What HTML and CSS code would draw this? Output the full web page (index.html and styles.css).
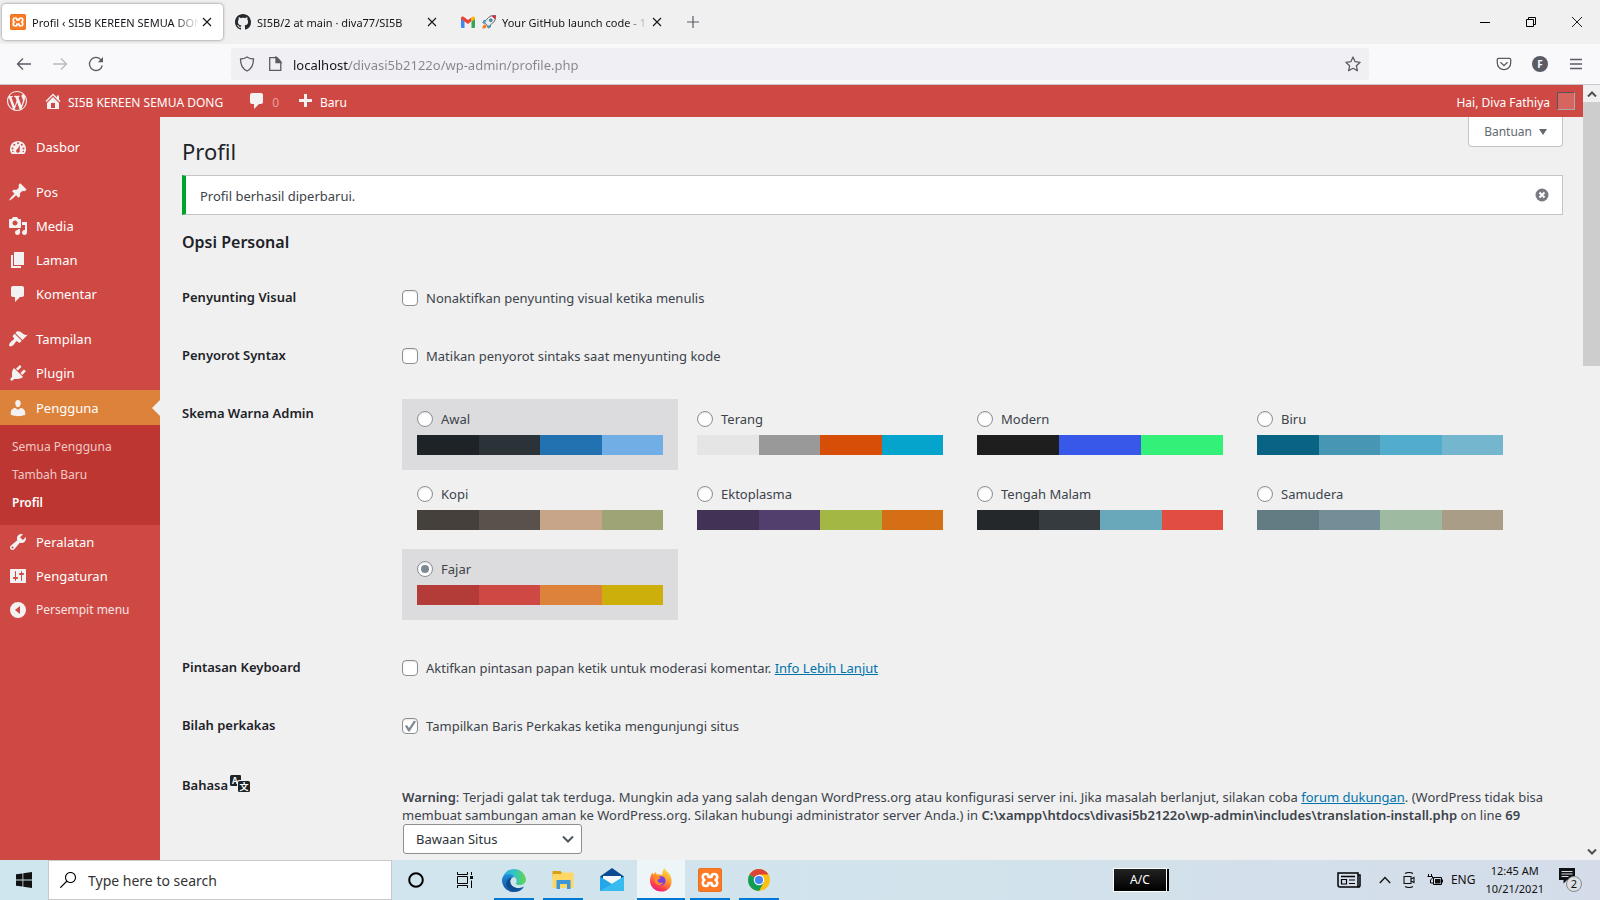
FILE: index.html
```html
<!DOCTYPE html>
<html lang="id">
<head>
<meta charset="utf-8">
<title>Profil ‹ SI5B KEREEN SEMUA DONG</title>
<link rel="stylesheet" href="styles.css">
</head>
<body>
<svg class="defs" aria-hidden="true">
  <symbol id="x" viewBox="0 0 10 10"><path d="M1 1l8 8M9 1L1 9" stroke="currentColor" stroke-width="1.1" fill="none"/></symbol>
  <symbol id="comment" viewBox="0 0 20 20"><path d="M5 2h9c1.1 0 2 .9 2 2v7c0 1.1-.9 2-2 2h-2l-5 5v-5H5c-1.1 0-2-.9-2-2V4c0-1.1.9-2 2-2z"/></symbol>
  <symbol id="xampp" viewBox="0 0 24 24"><rect width="24" height="24" rx="2.5" fill="#e8701f"/><rect x="1" y="1" width="22" height="22" rx="2" fill="#fb7a24"/><path d="M8 6C4 6 4 10.500 6.500 12 4 13.500 4 18 8 18c2.500 0 2.500-1.500 2.500-3h3c0 1.500 0 3 2.500 3 4 0 4-4.500 1.500-6C20 10.500 20 6 16 6c-2.500 0-2.500 1.500-2.500 3h-3c0-1.500 0-3-2.500-3z" fill="none" stroke="#fff" stroke-width="2.600" stroke-linejoin="round"/></symbol>
</svg>

<header class="browser">
  <div class="tabstrip">
    <div class="tab tab-active">
      <svg class="favicon"><use href="#xampp"/></svg>
      <span class="tab-title">Profil ‹ SI5B KEREEN SEMUA DONG</span>
      <button class="tab-close" aria-label="Close tab"><svg><use href="#x"/></svg></button>
    </div>
    <div class="tab">
      <svg class="favicon" viewBox="0 0 16 16"><path fill="#24292f" d="M8 0C3.580 0 0 3.580 0 8c0 3.540 2.290 6.530 5.470 7.590.4.070.55-.17.55-.38 0-.19-.01-.82-.01-1.490-2.010.37-2.530-.49-2.690-.94-.09-.23-.48-.94-.82-1.130-.28-.15-.68-.52-.01-.53.63-.01 1.080.58 1.230.82.72 1.210 1.870.87 2.330.66.070-.52.28-.87.51-1.070-1.780-.2-3.640-.89-3.640-3.950 0-.87.31-1.590.82-2.150-.08-.2-.36-1.020.08-2.120 0 0 .67-.21 2.200.82.64-.18 1.320-.27 2-.27s1.360.09 2 .27c1.530-1.040 2.200-.82 2.200-.82.44 1.100.16 1.920.08 2.120.51.56.82 1.270.82 2.150 0 3.070-1.870 3.750-3.650 3.950.29.25.54.73.54 1.480 0 1.070-.01 1.930-.01 2.200 0 .21.15.46.55.38A8.010 8.010 0 0 0 16 8c0-4.420-3.580-8-8-8z"/></svg>
      <span class="tab-title">SI5B/2 at main · diva77/SI5B</span>
      <button class="tab-close" aria-label="Close tab"><svg><use href="#x"/></svg></button>
    </div>
    <div class="tab">
      <svg class="favicon" viewBox="0 0 16 16"><path fill="#4285f4" d="M1 4.500l3.500 2.600V14H2a1 1 0 0 1-1-1z"/><path fill="#34a853" d="M11.500 7.100L15 4.500V13a1 1 0 0 1-1 1h-2.500z"/><path fill="#ea4335" d="M1 5V4c0-1.500 1.600-2 2.600-1.200L8 6.100l3.500-2.600v3.600L8 9.900 1 5z"/><path fill="#fbbc04" d="M11.500 3.400l.9-.6C13.500 2 15 2.600 15 4v1l-3.500 2.500z"/></svg>
      <svg class="rocket" viewBox="0 0 16 16"><path d="M15.500.5C10 0 7 2.500 4.800 6L2 6.500 1 9l2.500.3 3 3L7 15l2.500-1.200.3-2.800C13.500 8.500 16 6 15.500.5z" fill="#e8edf0" stroke="#333" stroke-width=".8"/><path d="M15.500.5c-2 0-3.200.2-4.300.8l3.500 3.500c.7-1.200.9-2.600.8-4.300z" fill="#e0243a"/><path d="M4.800 6L2 6.500 1 9l2.500.3zM9.800 11l-.3 2.800L7 15l-.4-2.700z" fill="#35a8d8"/><circle cx="10" cy="6" r="1.600" fill="#35a8d8" stroke="#333" stroke-width=".6"/><path d="M3.500 10.500C1.500 11 .6 13 .5 15.500 3 15.400 5 14.500 5.500 12.500z" fill="#f47a20"/></svg>
      <span class="tab-title">Your GitHub launch code - 1</span>
      <button class="tab-close" aria-label="Close tab"><svg><use href="#x"/></svg></button>
    </div>
    <button class="newtab" aria-label="New tab"><svg viewBox="0 0 12 12"><path d="M6 0v12M0 6h12" stroke="#5b5b66" stroke-width="1.200"/></svg></button>
    <div class="window-buttons">
      <button aria-label="Minimize"><svg viewBox="0 0 10 10"><path d="M0 5.500h10" stroke="#000"/></svg></button>
      <button aria-label="Restore"><svg viewBox="0 0 10 10"><path d="M.5 2.500h7v7h-7zM2.500 2.500v-2h7v7h-2" fill="none" stroke="#000"/></svg></button>
      <button aria-label="Close"><svg viewBox="0 0 10 10"><path d="M0 0l10 10M10 0L0 10" stroke="#000" stroke-width=".9"/></svg></button>
    </div>
  </div>
  <div class="toolbar">
    <div class="nav-buttons">
      <button aria-label="Back"><svg viewBox="0 0 16 16"><path d="M15 8H1.500M7 2.500L1.500 8 7 13.500"/></svg></button>
      <button aria-label="Forward" disabled><svg viewBox="0 0 16 16"><path d="M1 8h13.500M9 2.500L14.500 8 9 13.500"/></svg></button>
      <button aria-label="Reload"><svg viewBox="0 0 16 16"><path d="M14.300 9.500A6.500 6.500 0 1 1 12.800 3.600L14 5"/><path d="M15 1v5.200H9.800z" fill="#5b5b66" stroke="none"/></svg></button>
    </div>
    <div class="urlbar">
      <svg viewBox="0 0 16 16"><path d="M8 1C6 2.500 3.800 3 1.500 3c0 6 1.800 9.800 6.500 12 4.700-2.200 6.500-6 6.500-12C12.200 3 10 2.500 8 1z"/></svg>
      <svg class="doc" viewBox="0 0 16 16"><path d="M2.700 1.700h7.300l3.800 4v8.600H2.700z"/><path d="M9 1v5.500h5z" fill="#5b5b66"/></svg>
      <input type="text" aria-label="Address" value="localhost/divasi5b2122o/wp-admin/profile.php">
      <button aria-label="Bookmark"><svg viewBox="0 0 16 16"><path d="M8 1l2.100 4.700 5 .6-3.700 3.500 1 5L8 12.300l-4.400 2.500 1-5L.9 6.300l5-.6z" stroke-linejoin="round"/></svg></button>
    </div>
    <div class="tool-buttons">
      <button aria-label="Pocket"><svg viewBox="0 0 16 16"><path d="M2.500 2.300h11c.7 0 1.200.5 1.200 1.200V7a6.700 6.700 0 0 1-13.400 0V3.500c0-.7.5-1.200 1.200-1.200zM4.500 6.300L8 9.600l3.500-3.300"/></svg></button>
      <button class="account" aria-label="Account">F</button>
      <button aria-label="Menu"><svg viewBox="0 0 16 16"><path d="M2 3.500h12M2 8h12M2 12.500h12"/></svg></button>
    </div>
  </div>
</header>

<div class="viewport">
<div class="wp">
  <nav class="adminbar" aria-label="Toolbar">
    <a href="#" aria-label="WordPress"><svg class="wplogo" viewBox="0 0 20 20"><path d="M20 10c0-5.510-4.490-10-10-10C4.480 0 0 4.490 0 10c0 5.520 4.480 10 10 10 5.510 0 10-4.480 10-10zM7.780 15.370L4.370 6.220c.55-.02 1.170-.08 1.170-.08.5-.06.44-1.130-.06-1.110 0 0-1.450.11-2.370.11-.18 0-.37 0-.58-.01C4.120 2.690 6.870 1.110 10 1.110c2.330 0 4.450.87 6.050 2.340-.68-.11-1.650.39-1.650 1.580 0 .74.45 1.360.9 2.100.35.61.55 1.360.55 2.460 0 1.490-1.400 5-1.400 5l-3.030-8.370c.54-.02.82-.17.82-.17.5-.05.44-1.250-.06-1.220 0 0-1.440.12-2.380.12-.87 0-2.330-.12-2.330-.12-.5-.03-.56 1.200-.06 1.220l.92.08 1.260 3.410zM17.410 10c.24-.64.74-1.870.43-4.250.7 1.290 1.050 2.710 1.050 4.250 0 3.290-1.730 6.240-4.400 7.780.97-2.590 1.940-5.200 2.920-7.780zM6.100 18.090C3.120 16.650 1.110 13.530 1.110 10c0-1.300.23-2.480.72-3.590C3.250 10.300 4.670 14.200 6.100 18.090zm4.030-6.630l2.580 6.980c-.86.29-1.760.45-2.710.45-.79 0-1.570-.11-2.290-.33.81-2.380 1.620-4.740 2.420-7.100z"/></svg></a>
    <a href="#" class="site"><svg viewBox="0 0 20 20"><path d="M16 8.500l1.530 1.530-1.060 1.060L10 4.600l-6.470 6.490-1.060-1.060L10 2.500l4 4v-2h2v4zm-6-2.460l6 5.990V18H4v-5.970zM12 17v-5H8v5h4z"/></svg><span>SI5B KEREEN SEMUA DONG</span></a>
    <a href="#"><svg><use href="#comment"/></svg><span class="count">0</span></a>
    <a href="#"><svg viewBox="0 0 20 20"><path d="M17 8v3h-5v5H9v-5H4V8h5V3h3v5z"/></svg><span>Baru</span></a>
    <a href="#" class="greeting"><span>Hai, Diva Fathiya</span><i class="avatar"></i></a>
  </nav>
  <div class="wp-body">
    <nav class="menu" aria-label="Menu">
      <a href="#"><svg viewBox="0 0 20 20"><path fill-rule="evenodd" d="M3.760 17h12.480C17.340 15.630 18 13.890 18 12c0-4.410-3.580-8-8-8s-8 3.590-8 8c0 1.890.66 3.630 1.760 5z"/><g fill="#cf4944"><circle cx="10" cy="6.300" r="1"/><circle cx="6.300" cy="7.800" r="1"/><circle cx="13.800" cy="7.800" r="1"/><circle cx="4.500" cy="11.500" r="1"/><circle cx="15.500" cy="11.500" r="1"/><circle cx="4.800" cy="14.500" r=".8"/><circle cx="15.200" cy="14.500" r=".8"/><path d="M12 8.200l-.3 4.800a1.900 1.900 0 1 1-2.300-1z"/></g></svg>Dasbor</a>
      <a href="#" class="after-gap"><svg viewBox="0 0 20 20"><path d="M10.440 3.020l1.820-1.820 6.360 6.350-1.830 1.820c-1.050-.68-2.480-.57-3.410.36l-.75.75c-.92.93-1.040 2.350-.35 3.410l-1.830 1.820-2.410-2.410-2.800 2.790c-.42.42-3.380 2.710-3.800 2.290s1.860-3.390 2.280-3.810l2.790-2.790L4.100 9.360l1.830-1.820c1.050.69 2.480.57 3.400-.36l.75-.75c.93-.92 1.050-2.350.36-3.410z"/></svg>Pos</a>
      <a href="#"><svg viewBox="0 0 20 20"><path d="M13 11V4c0-.55-.45-1-1-1h-1.670L9 1H5L3.670 3H2c-.55 0-1 .45-1 1v7c0 .55.45 1 1 1h10c.55 0 1-.45 1-1zM7 4.500c1.380 0 2.500 1.120 2.500 2.500S8.380 9.500 7 9.500 4.500 8.380 4.500 7 5.620 4.500 7 4.500zM14 6h5v10.500c0 1.380-1.120 2.500-2.500 2.500S14 17.880 14 16.500s1.120-2.500 2.500-2.500c.17 0 .34.020.5.050V9h-3V6zm-4 8.050V13h2v3.500c0 1.380-1.120 2.500-2.500 2.500S7 17.880 7 16.500 8.120 14 9.500 14c.17 0 .34.020.5.050z"/></svg>Media</a>
      <a href="#"><svg viewBox="0 0 20 20"><path d="M6 15V2h10v13H6zm-1 1h8v2H3V5h2v11z"/></svg>Laman</a>
      <a href="#"><svg><use href="#comment"/></svg>Komentar</a>
      <a href="#" class="after-gap"><svg viewBox="0 0 20 20"><path d="M14.480 11.060L7.410 3.990l1.500-1.500c.5-.56 2.300-.47 3.510.32 1.210.8 1.430 1.280 2.910 2.100 1.180.64 2.450 1.260 4.450.85zm-.71.71L6.700 4.700 4.930 6.470c-.39.39-.39 1.020 0 1.410l1.060 1.060c.39.39.39 1.030 0 1.420-.6.6-1.430 1.110-2.210 1.690-.35.26-.7.53-1.010.84C1.430 14.230.4 16.080 1.400 17.070c.99 1 2.840-.03 4.180-1.360.31-.31.58-.66.85-1.020.57-.78 1.080-1.610 1.690-2.210.39-.39 1.020-.39 1.410 0l1.060 1.060c.39.39 1.020.39 1.410 0z"/></svg>Tampilan</a>
      <a href="#"><svg viewBox="0 0 20 20"><path d="M13.110 4.360L9.870 7.600 8 5.730l3.240-3.240c.35-.34 1.050-.2 1.560.32.52.51.66 1.210.31 1.550zm-8 1.770l.91-1.120 9.010 9.010-1.190.84c-.71.71-2.630 1.160-3.820 1.160H6.140L4.900 17.260c-.59.59-1.540.59-2.120 0-.59-.58-.59-1.530 0-2.120l1.240-1.240v-3.880c0-1.130.4-3.190 1.090-3.890zm7.260 3.970l3.240-3.240c.34-.35 1.040-.21 1.550.31.52.51.66 1.210.31 1.550l-3.240 3.250z"/></svg>Plugin</a>
      <a href="#" class="current"><svg viewBox="0 0 20 20"><path d="M10 9.250c-2.270 0-2.730-3.440-2.730-3.440C7 4.020 7.820 2 9.970 2c2.160 0 2.980 2.020 2.710 3.810 0 0-.41 3.440-2.680 3.440zm0 2.570L12.720 10c2.390 0 4.520 2.330 4.520 4.530v2.490s-3.650 1.130-7.240 1.130c-3.650 0-7.240-1.130-7.240-1.130v-2.490c0-2.250 1.940-4.480 4.470-4.480z"/></svg>Pengguna</a>
      <div class="submenu">
        <a href="#">Semua Pengguna</a>
        <a href="#">Tambah Baru</a>
        <a href="#" class="sub-current">Profil</a>
      </div>
      <a href="#"><svg viewBox="0 0 20 20"><path d="M16.680 9.770c-1.340 1.340-3.300 1.670-4.950.99l-5.410 6.520c-.99.99-2.590.99-3.580 0s-.99-2.590 0-3.570l6.520-5.420c-.68-1.650-.35-3.610.99-4.950 1.280-1.280 3.120-1.620 4.720-1.060l-2.890 2.890 2.820 2.820 2.860-2.870c.53 1.580.18 3.390-1.080 4.650zM3.810 16.210c.4.390 1.040.39 1.430 0 .4-.4.4-1.040 0-1.430-.39-.4-1.030-.4-1.430 0-.39.39-.39 1.030 0 1.430z"/></svg>Peralatan</a>
      <a href="#"><svg viewBox="0 0 20 20"><path d="M18 16V4c0-.55-.45-1-1-1H3c-.55 0-1 .45-1 1v12c0 .55.45 1 1 1h14c.55 0 1-.45 1-1zM8 11h1c.55 0 1 .45 1 1s-.45 1-1 1H8v1.500c0 .28-.22.5-.5.5s-.5-.22-.5-.5V13H6c-.55 0-1-.45-1-1s.45-1 1-1h1V5.500c0-.28.22-.5.5-.5s.5.220.5.500V11zm5-2h-1c-.55 0-1-.45-1-1s.45-1 1-1h1V5.500c0-.28.22-.5.5-.5s.5.220.5.500V7h1c.55 0 1 .45 1 1s-.45 1-1 1h-1v5.500c0 .28-.22.5-.5.5s-.5-.22-.5-.5V9z"/></svg>Pengaturan</a>
      <button class="collapse"><svg viewBox="0 0 20 20"><path fill-rule="evenodd" d="M10 2a8 8 0 1 0 0 16 8 8 0 0 0 0-16zM12 6v8l-5-4z"/></svg>Persempit menu</button>
    </nav>

    <main class="content">
      <div class="title-row">
        <h1>Profil</h1>
        <button class="help">Bantuan <span class="arrow"></span></button>
      </div>
      <div class="notice">
        <p>Profil berhasil diperbarui.</p>
        <button aria-label="Tutup"><svg viewBox="0 0 14 14"><circle cx="7" cy="7" r="6.500" fill="#787c82"/><path d="M4.500 4.500l5 5M9.500 4.500l-5 5" stroke="#fff" stroke-width="2"/></svg></button>
      </div>
      <h2>Opsi Personal</h2>
      <div class="form">
        <div class="row">
          <div class="head">Penyunting Visual</div>
          <label class="field"><input type="checkbox">Nonaktifkan penyunting visual ketika menulis</label>
        </div>
        <div class="row">
          <div class="head">Penyorot Syntax</div>
          <label class="field"><input type="checkbox">Matikan penyorot sintaks saat menyunting kode</label>
        </div>
        <div class="row schemes-row">
          <div class="head">Skema Warna Admin</div>
          <div class="schemes">
            <label class="scheme picked"><span><input type="radio" name="s">Awal</span><span class="palette"><i style="background:#1d2327"></i><i style="background:#2c3338"></i><i style="background:#2271b1"></i><i style="background:#72aee6"></i></span></label>
            <label class="scheme"><span><input type="radio" name="s">Terang</span><span class="palette"><i style="background:#e5e5e5"></i><i style="background:#999"></i><i style="background:#d64e07"></i><i style="background:#04a4cc"></i></span></label>
            <label class="scheme"><span><input type="radio" name="s">Modern</span><span class="palette"><i style="background:#1e1e1e"></i><i style="background:#3858e9"></i><i style="background:#33f078"></i></span></label>
            <label class="scheme"><span><input type="radio" name="s">Biru</span><span class="palette"><i style="background:#096484"></i><i style="background:#4796b3"></i><i style="background:#52accc"></i><i style="background:#74b6ce"></i></span></label>
            <label class="scheme"><span><input type="radio" name="s">Kopi</span><span class="palette"><i style="background:#46403c"></i><i style="background:#59524c"></i><i style="background:#c7a589"></i><i style="background:#9ea476"></i></span></label>
            <label class="scheme"><span><input type="radio" name="s">Ektoplasma</span><span class="palette"><i style="background:#413256"></i><i style="background:#523f6d"></i><i style="background:#a3b745"></i><i style="background:#d46f15"></i></span></label>
            <label class="scheme"><span><input type="radio" name="s">Tengah Malam</span><span class="palette"><i style="background:#25282b"></i><i style="background:#363b3f"></i><i style="background:#69a8bb"></i><i style="background:#e14d43"></i></span></label>
            <label class="scheme"><span><input type="radio" name="s">Samudera</span><span class="palette"><i style="background:#627c83"></i><i style="background:#738e96"></i><i style="background:#9ebaa0"></i><i style="background:#aa9d88"></i></span></label>
            <label class="scheme picked"><span><input type="radio" name="s" checked>Fajar</span><span class="palette"><i style="background:#b43c38"></i><i style="background:#cf4944"></i><i style="background:#dd823b"></i><i style="background:#ccaf0b"></i></span></label>
          </div>
        </div>
        <div class="row">
          <div class="head">Pintasan Keyboard</div>
          <div class="field"><input type="checkbox" id="kb"><label for="kb">Aktifkan pintasan papan ketik untuk moderasi komentar.</label>&nbsp;<a href="#">Info Lebih Lanjut</a></div>
        </div>
        <div class="row">
          <div class="head">Bilah perkakas</div>
          <label class="field"><input type="checkbox" checked>Tampilkan Baris Perkakas ketika mengunjungi situs</label>
        </div>
        <div class="row lang-row">
          <label class="head lang" for="locale">Bahasa <svg viewBox="0 0 20 17"><path d="M1.500 0H10a1 1 0 0 1 1 1v4H9a2 2 0 0 0-2 2v4H1.500A1.500 1.500 0 0 1 0 9.500v-8A1.500 1.500 0 0 1 1.500 0z" fill="#1d2327"/><rect x="8" y="6" width="12" height="11" rx="1.500" fill="#1d2327"/><text x="2" y="9" font-size="9" fill="#fff">A</text><text x="9.500" y="15" font-size="9" fill="#fff">文</text></svg></label>
          <div class="locale">
            <p><b>Warning</b>: Terjadi galat tak terduga. Mungkin ada yang salah dengan WordPress.org atau konfigurasi server ini. Jika masalah berlanjut, silakan coba <a href="#">forum dukungan</a>. (WordPress tidak bisa membuat sambungan aman ke WordPress.org. Silakan hubungi administrator server Anda.) in <b>C:\xampp\htdocs\divasi5b2122o\wp-admin\includes\translation-install.php</b> on line <b>69</b></p>
            <span class="select"><select id="locale"><option>Bawaan Situs</option></select><svg viewBox="0 0 12 8"><path d="M1 1.500l5 5 5-5" fill="none" stroke="#50575e" stroke-width="2"/></svg></span>
          </div>
        </div>
      </div>
    </main>
  </div>
</div>
<div class="scrollbar">
  <button aria-label="Scroll up"><svg viewBox="0 0 10 6"><path d="M1 5.500l4-4 4 4" fill="none" stroke="#505050" stroke-width="2"/></svg></button>
  <div class="thumb"></div>
  <button aria-label="Scroll down"><svg viewBox="0 0 10 6"><path d="M1 .5l4 4 4-4" fill="none" stroke="#505050" stroke-width="2"/></svg></button>
</div>
</div>

<footer class="taskbar">
  <button class="start" aria-label="Start"><svg viewBox="0 0 16 16"><path d="M0 2.300L6.500 1.400v6.200H0zM7.300 1.300L16 0v7.600H7.300zM0 8.400h6.500v6.200L0 13.700zM7.300 8.400H16V16l-8.700-1.300z"/></svg></button>
  <label class="search"><svg viewBox="0 0 16 16"><circle cx="10.500" cy="5.500" r="5" fill="none" stroke="#000" stroke-width="1.100"/><path d="M7 9L.3 15.700" stroke="#000" stroke-width="1.200"/></svg><input type="text" placeholder="Type here to search" aria-label="Search"></label>
  <div class="apps">
    <button aria-label="Cortana"><svg class="s16" viewBox="0 0 16 16"><circle cx="8" cy="8" r="6.800" fill="none" stroke="#000" stroke-width="2"/></svg></button>
    <button aria-label="Task View"><svg class="s16" viewBox="0 0 16 16"><path d="M.5 0v2.500h10V0M.5 16v-2.500h10V16M.5 4.500h10v7H.5zM14.500 0v3M14.500 8.500V16" fill="none" stroke="#000"/><rect x="13" y="4" width="3" height="3"/></svg></button>
    <button class="running" aria-label="Edge"><svg viewBox="0 0 24 24"><defs><linearGradient id="e1" x1="0" x2="1"><stop stop-color="#2fa7e8"/><stop offset=".5" stop-color="#33c4c6"/><stop offset="1" stop-color="#63d64b"/></linearGradient><linearGradient id="e2" x1="0" y1="0" x2="0" y2="1"><stop stop-color="#1f8edb"/><stop offset="1" stop-color="#0c4f9e"/></linearGradient></defs><path d="M.5 10A12 12 0 0 1 24 11c0 4-3 6-6.500 6-3.200 0-4-1.200-3.500-2 1.500-2 .5-5.500-3-6.500C7 7.400 2.500 8 .5 10z" fill="url(#e1)"/><path d="M0 12C.5 6 8 4.500 12.500 8.500 9 8.500 8 11.500 8.200 13.500c.4 4.500 5 7 9.300 6.500 1.500-.2 3-.8 4.500-1.600C20 22 16.500 24 12 24 5.500 24 0 19 0 12z" fill="url(#e2)"/><path d="M13 9c-3.500.2-5 2.600-4.800 5 .5 4.500 5.500 8 10.500 5.800-3 2.200-9 3.400-12.700-.3C2.500 16 4 9 13 9z" fill="#114a8b"/></svg></button>
    <button class="running" aria-label="File Explorer"><svg viewBox="0 0 24 24"><path d="M1.500 3h8l1.500 2v4H1.500z" fill="#d9a014"/><path d="M1.500 6H10l1.500-1.500h11V20h-21z" fill="#ffd767"/><path d="M5.500 12h14v9H16v-5H9v5H5.500z" fill="#3b97d9"/></svg></button>
    <button aria-label="Mail"><svg viewBox="0 0 24 24"><path d="M0 8.500L12 0l12 8.500-4 6H4z" fill="#0a4b92"/><path d="M3 8h18v8H3z" fill="#f5f7f8"/><path d="M0 8.500L12 16l12-7.500V23H0z" fill="#25a6e8"/><path d="M0 23L24 8.500V23z" fill="#38bcf0"/></svg></button>
    <button class="running active" aria-label="Firefox"><svg viewBox="0 0 24 24"><defs><linearGradient id="f1" x1=".8" y1="0" x2=".3" y2="1"><stop stop-color="#ffe64a"/><stop offset=".45" stop-color="#ff9a2c"/><stop offset=".8" stop-color="#ff3b4e"/><stop offset="1" stop-color="#e0188b"/></linearGradient></defs><path d="M15.500 0c1 3 4.500 4 6 8C25 17 19.500 23.500 12.500 23.500 5.500 23.500 1 18.500 1 12.500 1 9 2 6.500 3.500 4.500l.7 2L6.800 4l.8 2.500C9.500 6 11 6 13 7c.5-3 1-5 2.500-7z" fill="url(#f1)"/><circle cx="12" cy="12.800" r="4.600" fill="#7a3fe0"/><path d="M5.500 9.500c2-1.500 4-.5 6 0 0 1.500-2.500 1.500-3 3 .5 2.500 3.500 3 6 2-1.500 3-6 3.500-8 .5-1-1.500-1.200-3.500-1-5.500z" fill="#ff8a2b"/></svg></button>
    <button class="running" aria-label="XAMPP"><svg><use href="#xampp"/></svg></button>
    <button class="running" aria-label="Chrome"><svg viewBox="0 0 24 24"><circle cx="12" cy="12" r="11" fill="#fbc116"/><path d="M12 12L2.500 6.500A11 11 0 0 1 21.500 6.500H12z" fill="#db4437"/><path d="M12 12L2.500 6.500A11 11 0 0 0 12 23l4.700-8.500z" fill="#0f9d58"/><circle cx="12" cy="12" r="5.200" fill="#fff"/><circle cx="12" cy="12" r="4.100" fill="#4285f4"/></svg></button>
  </div>
  <div class="ac">A/C</div>
  <div class="tray">
    <svg class="news" viewBox="0 0 24 16"><path d="M1 1h20v14H3a2 2 0 0 1-2-2zM21 3h2v10.500a1.500 1.500 0 0 1-2 1.500M4 4.500h14" fill="none" stroke="#000" stroke-width="1.500"/><path d="M4.500 7.500h5v4.500h-5zM12 8h6M12 11.500h6" fill="none" stroke="#000" stroke-width="1.200"/></svg>
    <svg class="chev" viewBox="0 0 12 8"><path d="M.8 7L6 1.500 11.200 7" fill="none" stroke="#111" stroke-width="1.300"/></svg>
    <svg class="meet" viewBox="0 0 12 16"><path d="M1 4.500h7v7H1zM8 7l3-1.500v5L8 9M2 1.500Q6-.5 10 1.500M2 14.500q4 2 8 0" fill="none" stroke="#111" stroke-width="1.100"/></svg>
    <svg class="power" viewBox="0 0 16 12"><path d="M1.500 0v2M4.500 0v2M.5 2.500h5V4L3.500 6v3H6" fill="none" stroke="#000"/><path d="M6.500 3.500h8v7h-8z" fill="none" stroke="#000"/><path d="M8 5h5.500v4.500H8zM15 5.500h1v3h-1z"/></svg>
    <span class="lang-code">ENG</span>
    <div class="clock">12:45 AM<br>10/21/2021</div>
    <button class="notif" aria-label="Notifications"><svg viewBox="0 0 16 16"><path d="M0 0h16v12h-8L4.500 15.500V12H0z"/><path d="M2.500 3.500h11M2.500 6h11M2.500 8.500h7" stroke="#d3dce9"/></svg><span>2</span></button>
  </div>
</footer>
</body>
</html>
```
FILE: styles.css
```css
* { box-sizing: border-box; }
body {
  margin: 0;
  height: 100vh;
  display: flex;
  flex-direction: column;
  overflow: hidden;
  font: 13px/20px "Noto Sans", "Open Sans", "Noto Sans CJK SC", sans-serif;
  color: #3c434a;
}
button { border: 0; padding: 0; background: none; font: inherit; color: inherit; display: grid; place-items: center; }
svg { flex: none; display: block; fill: currentColor; }
.defs { position: absolute; width: 0; height: 0; }

/* Browser chrome */
.browser { flex: none; border-bottom: 1px solid #c8c8cc; background: #f9f9fb; }
.tabstrip { height: 44px; display: flex; align-items: center; background: #f0f0f0; padding-left: 2px; }
.tab { width: 221px; height: 36px; margin-right: 4px; padding: 0 8px; display: flex; align-items: center; gap: 6px; border-radius: 4px; color: #15141a; font-size: 11px; }
.tab-active { background: #fff; box-shadow: 0 0 3px #777; }
.favicon { width: 16px; height: 16px; }
.rocket { width: 14px; height: 14px; }
.tab-title { flex: 1; min-width: 0; overflow: hidden; white-space: nowrap; padding-top: 1px; -webkit-mask-image: linear-gradient(to left, transparent, #000 24px); mask-image: linear-gradient(to left, transparent, #000 24px); }
.tab-close { width: 16px; height: 20px; margin-left: -6px; }
.tab-close svg { width: 10px; height: 10px; }
.newtab { width: 32px; height: 32px; }
.newtab svg { width: 12px; height: 12px; }
.window-buttons { margin-left: auto; display: flex; }
.window-buttons button { width: 46px; height: 30px; }
.window-buttons svg { width: 10px; height: 10px; }
.toolbar { height: 40px; display: flex; align-items: center; padding: 0 6px; }
.toolbar svg { width: 16px; height: 16px; fill: none; stroke: #5b5b66; stroke-width: 1.3; }
.nav-buttons { display: flex; width: 225px; }
.nav-buttons button { width: 36px; height: 32px; }
.nav-buttons button:disabled { opacity: .4; }
.urlbar { flex: 1; height: 32px; display: flex; align-items: center; gap: 12px; padding: 0 8px; background: #f0f0f4; border-radius: 4px; }
.urlbar input {
  flex: 1; min-width: 0; border: 0; padding: 2px 0 0; margin-left: -2px; font: inherit; outline: 0;
  color: transparent;
  background: linear-gradient(to right, #15141a 56px, #84848c 56px);
  -webkit-background-clip: text; background-clip: text;
}
.tool-buttons { display: flex; width: 225px; justify-content: flex-end; }
.tool-buttons button { width: 36px; height: 32px; }
.tool-buttons .account { width: 16px; height: 16px; margin: 8px 10px; border-radius: 50%; background: #5b5b66; color: #fff; font-size: 10px; font-weight: 700; line-height: 16px; }

/* Page viewport */
.viewport { flex: 1; min-height: 0; display: flex; background: #f0f0f1; }
.wp { flex: 1; min-width: 0; display: flex; flex-direction: column; }
.scrollbar { width: 17px; display: flex; flex-direction: column; background: #f0f0f0; }
.scrollbar button { height: 17px; width: 17px; }
.scrollbar svg { width: 10px; height: 6px; }
.thumb { height: 264px; background: #cdcdcd; }
.scrollbar button:last-child { margin-top: auto; }

.adminbar { flex: none; height: 32px; display: flex; align-items: center; gap: 16px; padding: 0 8px 0 7px; background: #cf4944; }
.adminbar a { display: flex; align-items: center; gap: 5px; color: #fff; text-decoration: none; font-size: 12px; }
.adminbar span { padding-top: 3px; }
.adminbar svg, .menu svg { width: 20px; height: 20px; color: #f3f1f1; }
.adminbar .site { margin-right: 8px; }
.adminbar .count { color: #e79f9c; }
.adminbar .greeting { margin-left: auto; gap: 7px; }
.avatar { width: 18px; height: 18px; background: #d6645f; border: 1px solid; border-color: #555 #aaa #aaa #555; }

.wp-body { flex: 1; min-height: 0; display: flex; }
.menu { width: 160px; flex: none; padding-top: 13px; background: #cf4944; }
.menu > a, .collapse { display: flex; align-items: center; gap: 8px; height: 34px; padding: 0 0 0 8px; color: #fff; text-decoration: none; }
.menu > .after-gap { margin-top: 11px; }
.menu > .current { position: relative; height: 35px; background: #dd823b; }
.current::after { content: ""; position: absolute; right: 0; top: 10px; border: 8px solid transparent; border-left: 0; border-right-color: #f0f0f1; }
.submenu { background: #be3631; padding: 8px 0; display: flex; flex-direction: column; }
.submenu a { padding-left: 12px; line-height: 28px; font-size: 12px; color: #f1c8c6; text-decoration: none; }
.submenu .sub-current { color: #fff; font-weight: 600; }
.collapse { color: #f8e4e3; font-size: 12px; }

.content { flex: 1; min-width: 0; padding: 0 20px 0 22px; }
.content a { color: #0073aa; }
.title-row { display: flex; justify-content: space-between; align-items: flex-start; height: 58px; }
h1 { margin: 18px 0 0; font-size: 22px; line-height: 32px; font-weight: 400; color: #1d2327; }
.help { display: flex; align-items: center; gap: 7px; height: 30px; padding: 1px 15px 0; background: #fff; border: 1px solid #c3c4c7; border-top: 0; border-radius: 0 0 4px 4px; color: #646970; font-size: 12px; }
.arrow { border: 4px solid transparent; border-top: 6px solid #646970; border-bottom: 0; }
.notice { display: flex; align-items: center; justify-content: space-between; height: 40px; padding: 0 13px 0 14px; background: #fff; border: 1px solid #c3c4c7; border-left: 4px solid #00a32a; }
.notice p { margin: 0; padding-top: 2px; }
.notice svg { width: 14px; height: 14px; }
h2 { margin: 15px 0 0; font-size: 16px; line-height: 24px; font-weight: 600; color: #1d2327; }

.row { display: flex; min-height: 58px; padding-top: 19px; }
.form { padding-top: 14px; }
.head { width: 220px; flex: none; font-weight: 600; color: #1d2327; line-height: 20px; }
.field { display: flex; align-items: center; height: 22px; }
input[type=checkbox], input[type=radio] { appearance: none; flex: none; width: 16px; height: 16px; margin: 0 8px 0 0; border: 1px solid #8c8f94; border-radius: 4px; background: #fff; box-shadow: inset 0 1px 2px rgba(0,0,0,.1); display: grid; place-items: center; }
input[type=radio] { border-radius: 50%; }
input[type=radio]:checked::before { content: ""; width: 8px; height: 8px; border-radius: 50%; background: #7e8993; }
input[type=checkbox]:checked::before { content: ""; width: 12px; height: 12px; background: #7e8993; clip-path: polygon(8% 50%, 24% 42%, 42% 66%, 82% 6%, 100% 12%, 46% 96%, 36% 96%); }
.schemes-row { padding-top: 15px; padding-bottom: 18px; }
.schemes-row .head { padding-top: 4px; }
.schemes { flex: 1; display: grid; grid-template-columns: repeat(4, minmax(0, 276px)); gap: 4px; }
.scheme { height: 71px; padding: 10px 15px 0; }
.scheme > span:first-child { display: flex; align-items: center; height: 20px; }
.picked { background: #dcdcde; }
.scheme .palette { display: flex; height: 20px; margin-top: 6px; }
.palette i { flex: 1; }
.lang-row { padding-top: 21px; }
.lang { display: flex; gap: 2px; }
.lang svg { width: 20px; height: 17px; }
.lang text { font-family: "Noto Sans CJK SC", sans-serif; font-weight: 700; }
.locale { flex: 1; min-width: 0; padding-top: 13px; }
.locale p { margin: 0; line-height: 18px; }
.locale b { font-weight: 600; }
.select { display: flex; align-items: center; width: 180px; padding-left: 1px; }
.select select { appearance: none; width: 100%; height: 30px; padding: 0 24px 0 12px; border: 1px solid #8c8f94; border-radius: 3px; background: #fff; font: inherit; color: #2c3338; }
.select svg { width: 12px; height: 8px; margin-left: -20px; }

/* Taskbar */
.taskbar { flex: none; height: 40px; display: flex; background: linear-gradient(to right, #cfe6ee, #d2e3ec 60%, #d4dce9); color: #111; }
.start { width: 48px; }
.start svg { width: 16px; height: 16px; }
.search { width: 344px; display: flex; align-items: center; gap: 12px; padding-left: 11px; background: #fff; border: 1px solid #c8c8c8; }
.search svg { width: 16px; height: 16px; }
.search input { flex: 1; border: 0; padding: 2px 0 0; background: none; font: inherit; font-size: 14px; }
.search input::placeholder { color: #333; opacity: 1; }
.apps { display: flex; gap: 1px; }
.apps button { width: 48px; height: 40px; background: linear-gradient(#0078d7, #0078d7) center bottom / 0 2px no-repeat; }
.apps .running { background-size: 40px 2px; }
.apps .active { background-color: #edf5f8; background-size: 48px 2px; }
.apps svg { width: 24px; height: 24px; }
.apps .s16 { width: 16px; height: 16px; }
.ac { align-self: center; margin-left: auto; width: 54px; height: 24px; border: 1px solid #fff; background: linear-gradient(#222, #000); box-shadow: 3px 0 0 -1px #000; color: #fff; font-size: 12px; line-height: 22px; text-align: center; }
.tray { display: flex; align-items: center; gap: 12px; padding-left: 170px; padding-right: 17px; font-size: 12px; }
.news { width: 24px; height: 16px; margin-right: 6px; }
.chev { width: 12px; height: 8px; }
.meet { width: 12px; height: 16px; }
.power { width: 16px; height: 12px; }
.lang-code { margin-left: -4px; }
.clock { margin-left: -2px; font-size: 11px; line-height: 18px; text-align: center; }
.notif { position: relative; width: 24px; height: 24px; margin-left: 3px; place-items: start; }
.notif svg { width: 16px; height: 16px; }
.notif span { position: absolute; left: 7px; top: 8px; width: 16px; height: 16px; border: 1px solid #888; border-radius: 50%; background: #dcdfe4; font-size: 11px; line-height: 14px; }
```
